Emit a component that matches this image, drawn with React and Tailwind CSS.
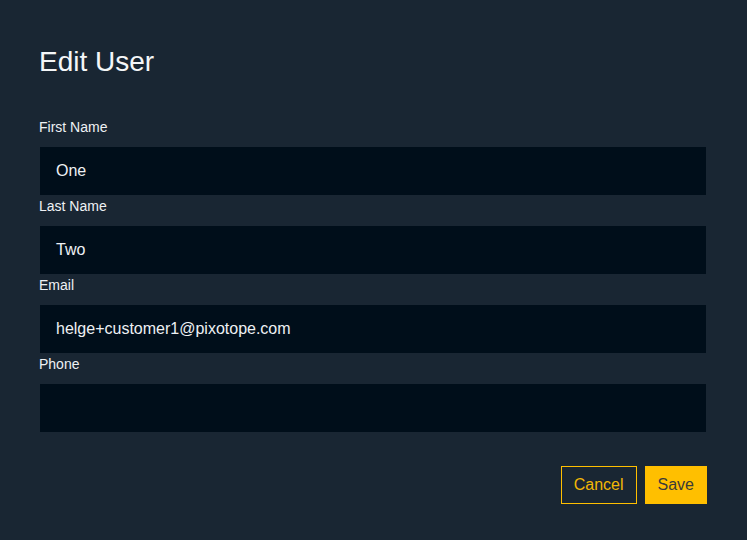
export default function App() {
  const fields = [
    { label: "First Name", value: "One" },
    { label: "Last Name", value: "Two" },
    { label: "Email", value: "helge+customer1@pixotope.com" },
    { label: "Phone", value: "" },
  ];
  return (
    <div
      className="w-[747px] h-[540px] bg-[#192633] pl-[40px] pr-[40px] pt-[46px] overflow-hidden"
      style={{ fontFamily: '"Liberation Sans", Arial, sans-serif' }}
    >
      <h1 className="-ml-[1px] text-[28px] leading-[32px] text-[#f4f6f8] m-0">Edit User</h1>
      <div className="mt-[41px] flex flex-col gap-[3px]">
        {fields.map((f) => (
          <div key={f.label} className="flex flex-col">
            <label className="-ml-[1px] text-[14px] leading-[16px] text-[#eef1f4]">{f.label}</label>
            <div className="mt-[12px] w-[666px] h-[48px] bg-[#000e1a] flex items-center px-[16px] text-[16px] text-[#eef1f4]">
              {f.value}
            </div>
          </div>
        ))}
      </div>
      <div className="mt-[34px] flex justify-end gap-[8px]">
        <button className="h-[38px] px-[12px] border border-[#ffbf00] text-[#f2b705] text-[16px] leading-[20px] bg-transparent">
          Cancel
        </button>
        <button className="h-[38px] px-[12px] border border-[#ffbf00] bg-[#ffbf00] text-[#3a3a3a] text-[16px] leading-[20px]">
          Save
        </button>
      </div>
    </div>
  );
}
